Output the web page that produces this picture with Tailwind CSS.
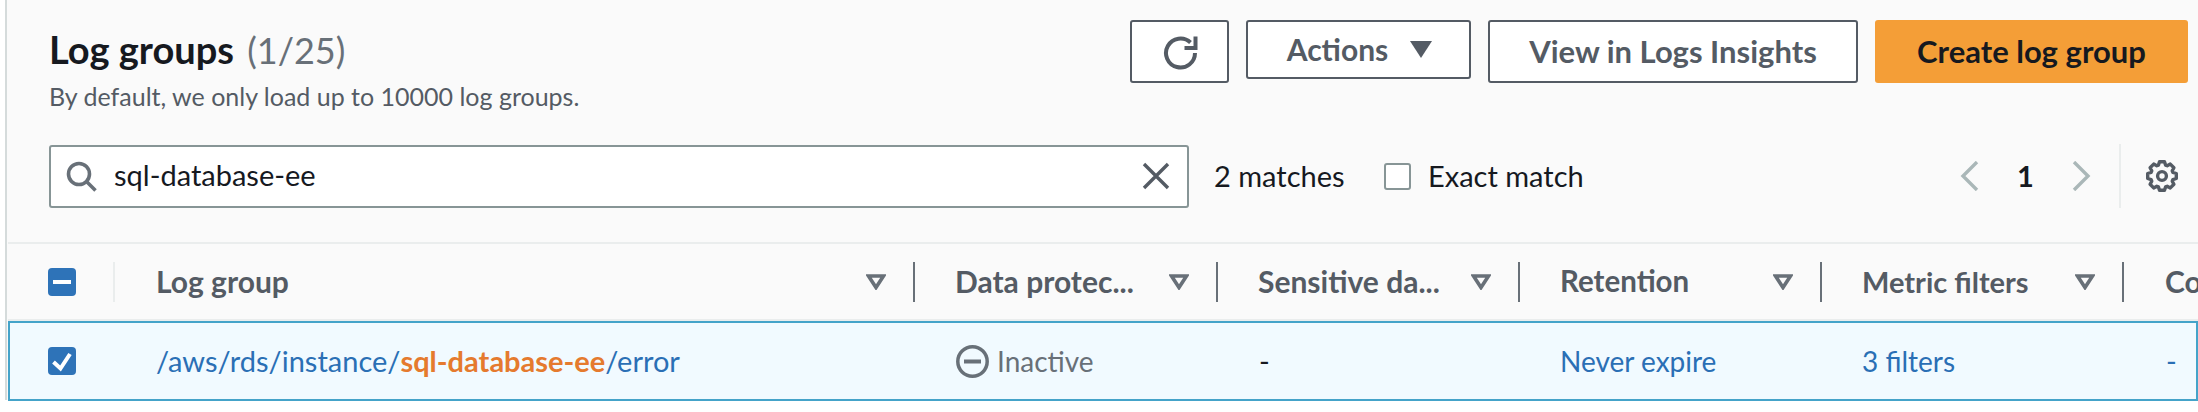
<!DOCTYPE html>
<html lang="en">
<head>
  <meta charset="UTF-8" />
  <title>Log groups</title>
  <script src="https://cdn.jsdelivr.net/npm/@tailwindcss/browser@4"></script>
</head>
<body class="bg-white font-[Lato,sans-serif] text-[#16191f] overflow-hidden">
  <div class="w-[2198px] h-[412px] overflow-hidden pl-[5px]">
    <div class="h-[400px] bg-[#fafafa] border-l-2 border-[#d5dbdb] pl-px">

      <!-- Title and actions -->
      <div class="h-[144px] flex items-start pl-[41px] pr-[10px]">
        <div class="flex-1 pt-[29px]">
          <h1 class="text-[38px] leading-[40px] font-bold">Log groups <span class="ml-[4px] text-[36px] font-normal text-[#687078]">(1/25)</span></h1>
          <p class="text-[25px] leading-[30px] mt-[11px] text-[#545b64]">By default, we only load up to 10000 log groups.</p>
        </div>
        <div class="flex items-start gap-[17px] pt-[20px]">
          <button class="w-[99px] h-[63px] flex items-center justify-center bg-white border-2 border-[#545b64] rounded-[3px]">
            <svg class="w-[36px] h-[36px]" viewBox="0 0 36 36" fill="none" stroke="#545b64" stroke-width="4">
              <path d="M28.5 8.5A14.5 14.5 0 1 0 33 19" />
              <path d="M22.5 14H33.5V2.5" />
            </svg>
          </button>
          <button class="w-[225px] h-[59px] flex items-center justify-center gap-[22px] pl-[2px] bg-white border-2 border-[#545b64] rounded-[3px] text-[30px] font-bold text-[#545b64]">
            Actions
            <svg class="w-[22px] h-[17px]" viewBox="0 0 22 17"><path d="M0 0h22L11 17z" fill="#545b64" /></svg>
          </button>
          <button class="w-[370px] h-[63px] bg-white border-2 border-[#545b64] rounded-[3px] text-[31px] font-bold text-[#545b64]">View in Logs Insights</button>
          <button class="w-[313px] h-[63px] bg-[#f49e37] rounded-[3px] text-[31px] font-bold text-[#16191f]">Create log group</button>
        </div>
      </div>

      <!-- Filter row -->
      <div class="h-[64px] flex items-center pl-[41px]">
        <div class="w-[1140px] h-[63px] flex items-center bg-white border-2 border-[#879596] rounded-[3px] pl-[15px] pr-[17px]">
          <svg class="w-[31px] h-[31px] shrink-0" viewBox="0 0 31 31" fill="none" stroke="#687078" stroke-width="3.6">
            <circle cx="13" cy="13" r="10.5" />
            <path d="M20.5 20.5 29.5 29.5" />
          </svg>
          <span class="ml-[17px] flex-1 text-[29px] leading-[36px] pb-[2px] text-[#16191f]">sql-database-ee</span>
          <svg class="w-[28px] h-[28px] shrink-0" viewBox="0 0 28 28" fill="none" stroke="#545b64" stroke-width="3.4">
            <path d="M2 2 26 26M26 2 2 26" />
          </svg>
        </div>
        <span class="ml-[25px] w-[170px] text-[29px]">2 matches</span>
        <span class="w-[27px] h-[27px] bg-white border-2 border-[#879596] rounded-[3px]"></span>
        <span class="ml-[17px] text-[29px]">Exact match</span>
        <div class="ml-auto flex items-center h-full">
          <svg class="w-[19px] h-[30px]" viewBox="0 0 19 30" fill="none" stroke="#aab7b8" stroke-width="3.4"><path d="M17 1 3 15l14 14" /></svg>
          <span class="w-[93px] text-center text-[29px] font-bold">1</span>
          <svg class="w-[19px] h-[30px]" viewBox="0 0 19 30" fill="none" stroke="#aab7b8" stroke-width="3.4"><path d="M2 1l14 14L2 29" /></svg>
          <div class="ml-[28px] h-full border-l-2 border-[#eaeded] pl-[25px] pr-[20px] flex items-center">
            <svg class="w-[32px] h-[32px]" viewBox="0 0 32 32" fill="none" stroke="#545b64" stroke-width="3.4" stroke-linejoin="round">
              <circle cx="16" cy="16" r="4.4" />
              <polygon points="13.5,1.7 18.5,1.7 19.55,5.1 21.2,5.75 24.3,4.1 27.9,7.7 26.25,10.8 26.9,12.45 30.3,13.5 30.3,18.5 26.9,19.55 26.25,21.2 27.9,24.3 24.3,27.9 21.2,26.25 19.55,26.9 18.5,30.3 13.5,30.3 12.45,26.9 10.8,26.25 7.7,27.9 4.1,24.3 5.75,21.2 5.1,19.55 1.7,18.5 1.7,13.5 5.1,12.45 5.75,10.8 4.1,7.7 7.7,4.1 10.8,5.75 12.45,5.1" />
            </svg>
          </div>
        </div>
      </div>

      <!-- Table header -->
      <div class="mt-[34px] h-[79px] border-y-2 border-[#eaeded] grid grid-cols-[107px_800px_303px_302px_302px_302px_auto] items-center text-[30px] font-bold text-[#545b64]">
        <div class="flex items-center h-10 border-r-2 border-[#eaeded] pl-[40px]">
          <span class="w-[28px] h-[28px] flex items-center justify-center bg-[#2e73b8] rounded-[4px]"><span class="w-[18px] h-[4px] bg-white"></span></span>
        </div>
        <div class="flex items-center justify-between h-10 pl-[41px] pr-[27px] border-r-2 border-[#687078]">
          <span>Log group</span>
          <svg class="w-[20px] h-[16px]" viewBox="0 0 20 16" fill="none" stroke="#687078" stroke-width="3.6"><path d="M2.5 2h15L10 13.5z" /></svg>
        </div>
        <div class="flex items-center justify-between h-10 pl-[40px] pr-[27px] border-r-2 border-[#687078]">
          <span>Data protec...</span>
          <svg class="w-[20px] h-[16px]" viewBox="0 0 20 16" fill="none" stroke="#687078" stroke-width="3.6"><path d="M2.5 2h15L10 13.5z" /></svg>
        </div>
        <div class="flex items-center justify-between h-10 pl-[40px] pr-[27px] border-r-2 border-[#687078]">
          <span>Sensitive da...</span>
          <svg class="w-[20px] h-[16px]" viewBox="0 0 20 16" fill="none" stroke="#687078" stroke-width="3.6"><path d="M2.5 2h15L10 13.5z" /></svg>
        </div>
        <div class="flex items-center justify-between h-10 pl-[40px] pr-[27px] border-r-2 border-[#687078]">
          <span class="text-[29.5px]">Retention</span>
          <svg class="w-[20px] h-[16px]" viewBox="0 0 20 16" fill="none" stroke="#687078" stroke-width="3.6"><path d="M2.5 2h15L10 13.5z" /></svg>
        </div>
        <div class="flex items-center justify-between h-10 pl-[40px] pr-[27px] border-r-2 border-[#687078]">
          <span class="text-[29px]">Metric filters</span>
          <svg class="w-[20px] h-[16px]" viewBox="0 0 20 16" fill="none" stroke="#687078" stroke-width="3.6"><path d="M2.5 2h15L10 13.5z" /></svg>
        </div>
        <div class="pl-[41px]">Co</div>
      </div>

      <!-- Selected row -->
      <div class="h-[80px] border-2 border-[#44a3c9] bg-[#f1faff] grid grid-cols-[105px_800px_303px_302px_302px_302px_auto] items-center text-[29px]">
        <div class="pl-[38px]">
          <span class="w-[28px] h-[28px] flex items-center justify-center bg-[#2e73b8] rounded-[4px]">
            <svg class="w-[28px] h-[28px]" viewBox="0 0 28 28" fill="none" stroke="#fff" stroke-width="4"><path d="M5.5 15l7 6.5L22 7" /></svg>
          </span>
        </div>
        <div class="pl-[41px] text-[#2a6fb5]">/aws/rds/instance/<span class="font-bold text-[#e57a2e]">sql-database-ee</span>/error</div>
        <div class="pl-[41px] flex items-center gap-[8px] text-[#687078] text-[28px]">
          <svg class="w-[33px] h-[33px]" viewBox="0 0 33 33" fill="none" stroke="#687078" stroke-width="3.5">
            <circle cx="16.5" cy="16.5" r="14.7" />
            <path d="M8 16.5h17" stroke-width="4" />
          </svg>
          Inactive
        </div>
        <div class="pl-[41px]">-</div>
        <div class="pl-[40px] text-[#2a6fb5] text-[28px]">Never expire</div>
        <div class="pl-[40px] text-[#2a6fb5] text-[28px]">3 filters</div>
        <div class="pl-[42px] text-[#2a6fb5]">-</div>
      </div>

    </div>
  </div>
</body>
</html>
